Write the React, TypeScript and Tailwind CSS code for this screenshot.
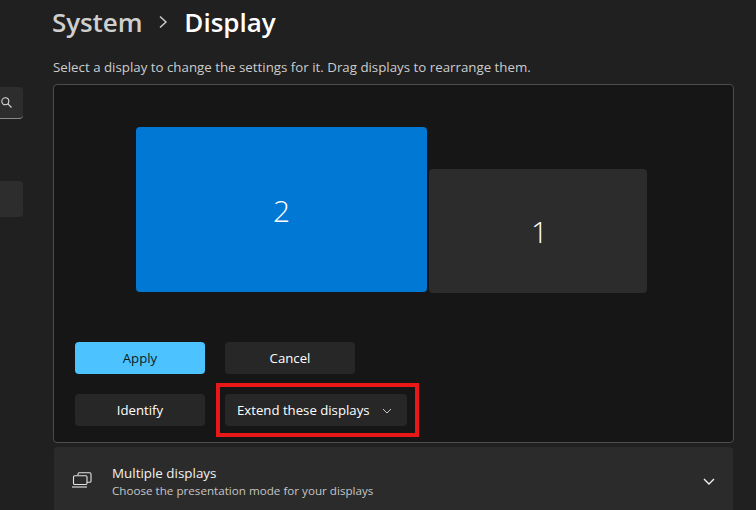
import React from "react";

function Btn({ children, className }: { children: React.ReactNode; className?: string }) {
  return (
    <div className={"h-8 pt-px rounded-[4px] flex items-center text-[13.2px] " + (className ?? "")}>
      {children}
    </div>
  );
}

export default function App() {
  return (
    <div
      className="relative w-[756px] h-[510px] overflow-hidden bg-[#202020] flex text-white"
      style={{ fontFamily: '"Open Sans", "Noto Sans", sans-serif' }}
    >
      {/* Sidebar */}
      <div className="w-[23px] shrink-0 flex flex-col pt-[87px]">
        <div className="h-8 shrink-0 rounded-r-[4px] bg-[#2d2d2d] border-b border-[#8a8a8a] flex items-center justify-end pr-[11px]">
          <svg width="11" height="11" viewBox="0 0 11 11" fill="none" stroke="#d8d8d8" strokeWidth="1.1">
            <circle cx="4.3" cy="4.3" r="3.5" />
            <path d="M6.9 6.9 10.5 10.5" />
          </svg>
        </div>
        <div className="h-9 shrink-0 mt-[62px] rounded-r-[4px] bg-[#2d2d2d]" />
      </div>

      {/* Main */}
      <div className="w-[711px] ml-[30px] shrink-0 flex flex-col">
        <div className="h-[43px] shrink-0 flex items-center text-[26px] font-semibold leading-none">
          <span className="text-[#cfcfcf] ml-[-1px] tracking-[-0.1px]">System</span>
          <svg className="ml-[16px] mr-[16px]" width="10" height="14" viewBox="0 0 10 14" fill="none" stroke="#cfcfcf" strokeWidth="1.4">
            <path d="M2 1.5 8 7 2 12.5" />
          </svg>
          <span className="text-white">Display</span>
        </div>
        <p className="mt-[15px] h-[19px] shrink-0 text-[13.3px] leading-[19px] text-[#cccccc]">
          Select a display to change the settings for it. Drag displays to rearrange them.
        </p>

        <div className="mt-[7px] w-[681px] h-[359px] shrink-0 rounded-[4px] bg-[#161616] border border-[#4c4c4c] flex flex-col pl-[21px]">
          <div className="flex items-start pl-[61px] pt-[42px]">
            <div className="w-[291px] h-[165px] pt-[2px] rounded-[4px] bg-[#0078d4] flex items-center justify-center text-[30px] font-light">
              2
            </div>
            <div className="w-[218px] h-[124px] ml-[2px] mt-[42px] pt-px pl-[3px] rounded-[4px] bg-[#2c2c2c] flex items-center justify-center text-[30px] font-light">
              1
            </div>
          </div>
          <div className="mt-[49px] flex gap-5">
            <Btn className="w-[130px] justify-center bg-[#4cc2ff] text-[#0b1a24]">Apply</Btn>
            <Btn className="w-[130px] justify-center bg-[#272727]">Cancel</Btn>
          </div>
          <div className="mt-5 flex gap-5">
            <Btn className="w-[130px] justify-center bg-[#272727]">Identify</Btn>
            <Btn className="w-[182px] justify-between bg-[#272727] pl-3 pr-[15px]">
              <span>Extend these displays</span>
              <svg width="10" height="6" viewBox="0 0 10 6" fill="none" stroke="#c8c8c8" strokeWidth="1">
                <path d="M1 1 5 5 9 1" />
              </svg>
            </Btn>
          </div>
        </div>

        <div className="mt-1 ml-px w-[679px] h-[80px] shrink-0 rounded-t-[4px] bg-[#2b2b2b] flex items-start pt-[16px] pl-[18px] pr-[18px]">
          <svg className="mt-[9px]" width="20" height="16" viewBox="0 0 20 16" fill="none" stroke="#e4e4e4" strokeWidth="1.1">
            <path d="M6 3V2a1.2 1.2 0 0 1 1.2-1.2h10.6A1.2 1.2 0 0 1 19 2v7a1.2 1.2 0 0 1-1.2 1.2H15" />
            <rect x="1.5" y="3.8" width="13.5" height="8.7" rx="1.2" />
            <path d="M0 15h15" />
          </svg>
          <div className="ml-5 flex flex-col">
            <span className="text-[13.4px] leading-[20px] text-[#f2f2f2]">Multiple displays</span>
            <span className="text-[11.65px] leading-[16px] text-[#c5c5c5]">Choose the presentation mode for your displays</span>
          </div>
          <svg className="ml-auto mt-[15px]" width="12" height="7" viewBox="0 0 12 7" fill="none" stroke="#f0f0f0" strokeWidth="1.4">
            <path d="M1 1 6 6 11 1" />
          </svg>
        </div>
      </div>

      {/* Scrollbar */}
      <div className="ml-[-2px] mt-[67px] w-[2px] h-[443px] bg-[#8a8a8a]" />

      {/* Red highlight */}
      <div className="absolute left-[216px] top-[383px] w-[203px] h-[54px] border-[4px] border-[#e81818]" />
    </div>
  );
}
